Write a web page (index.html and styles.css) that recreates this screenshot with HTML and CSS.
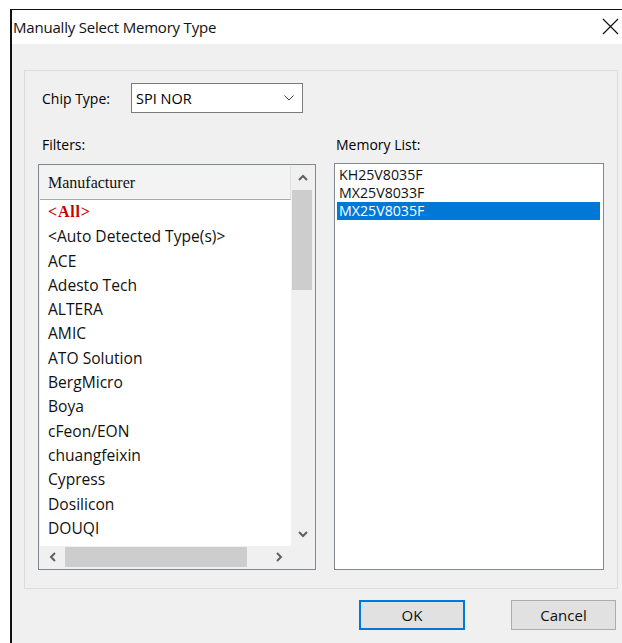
FILE: index.html
```html
<!DOCTYPE html>
<html lang="en">
<head>
<meta charset="utf-8">
<title>Manually Select Memory Type</title>
<link rel="stylesheet" href="styles.css">
</head>
<body>
<div class="window">
  <div class="titlebar">
    <span class="title">Manually Select Memory Type</span>
    <svg class="close" width="17" height="17" viewBox="0 0 17 17">
      <path d="M1 1 L16 16 M16 1 L1 16" stroke="#111" stroke-width="1.2" fill="none"/>
    </svg>
  </div>
  <div class="client">
    <div class="group">
      <div class="chip-row">
        <span class="chip-label">Chip Type:</span>
        <div class="combo">
          <span>SPI NOR</span>
          <svg class="combo-arrow" width="10" height="6" viewBox="0 0 10 6">
            <path d="M0.5 0.5 L5 5 L9.5 0.5" stroke="#444" stroke-width="1" fill="none"/>
          </svg>
        </div>
      </div>
      <div class="columns">
        <div class="col col-filters">
          <div class="caption">Filters:</div>
          <div class="listbox filters">
            <div class="list-main">
              <div class="header">Manufacturer</div>
              <ul class="items">
                <li class="all">&lt;All&gt;</li>
                <li>&lt;Auto Detected Type(s)&gt;</li>
                <li>ACE</li>
                <li>Adesto Tech</li>
                <li>ALTERA</li>
                <li>AMIC</li>
                <li>ATO Solution</li>
                <li>BergMicro</li>
                <li>Boya</li>
                <li>cFeon/EON</li>
                <li>chuangfeixin</li>
                <li>Cypress</li>
                <li>Dosilicon</li>
                <li>DOUQI</li>
              </ul>
            </div>
            <div class="vscroll">
              <div class="sb-btn">
                <svg width="10" height="7" viewBox="0 0 10 7"><path d="M1 6 L5 2 L9 6" stroke="#606060" stroke-width="2" fill="none"/></svg>
              </div>
              <div class="vtrack"><div class="vthumb"></div></div>
              <div class="sb-btn">
                <svg width="10" height="7" viewBox="0 0 10 7"><path d="M1 1 L5 5 L9 1" stroke="#606060" stroke-width="2" fill="none"/></svg>
              </div>
            </div>
            <div class="hscroll">
              <div class="sb-btn h">
                <svg width="7" height="10" viewBox="0 0 7 10"><path d="M6 1 L2 5 L6 9" stroke="#606060" stroke-width="2" fill="none"/></svg>
              </div>
              <div class="htrack"><div class="hthumb"></div></div>
              <div class="sb-btn h">
                <svg width="7" height="10" viewBox="0 0 7 10"><path d="M1 1 L5 5 L1 9" stroke="#606060" stroke-width="2" fill="none"/></svg>
              </div>
            </div>
            <div class="corner"></div>
          </div>
        </div>
        <div class="col col-memory">
          <div class="caption">Memory List:</div>
          <ul class="listbox memory">
            <li>KH25V8035F</li>
            <li>MX25V8033F</li>
            <li class="selected">MX25V8035F</li>
          </ul>
        </div>
      </div>
    </div>
    <div class="buttons">
      <button class="btn default">OK</button>
      <button class="btn">Cancel</button>
    </div>
  </div>
</div>
</body>
</html>
```

FILE: styles.css
```css
* {
  box-sizing: border-box;
}

html, body {
  margin: 0;
  padding: 0;
}

body {
  width: 622px;
  height: 643px;
  overflow: hidden;
  background: #fff;
  font-family: "Open Sans", "Noto Sans", sans-serif;
  color: #000;
}

.window {
  margin: 9px 0 0 10px;
  width: 612px;
  height: 634px;
  border-top: 1px solid #111;
  border-left: 2px solid #111;
  display: flex;
  flex-direction: column;
}

.titlebar {
  height: 34px;
  flex: none;
  background: #fff;
  display: flex;
  align-items: center;
  justify-content: space-between;
  padding: 0 3px 0 1px;
}

.title {
  font-size: 15px;
  letter-spacing: -0.2px;
  color: #111;
}

.close {
  display: block;
  margin-top: -1px;
}

.client {
  flex: 1;
  background: #f0f0f0;
  padding: 26px 0 0 12px;
}

.group {
  width: 594px;
  height: 519px;
  border: 1px solid #dcdcdc;
  padding: 12px 0 0 13px;
}

.chip-row {
  display: flex;
  align-items: center;
  height: 30px;
  padding-left: 4px;
}

.chip-label {
  width: 89px;
  font-size: 14px;
}

.combo {
  width: 172px;
  height: 30px;
  border: 1px solid #7a7a7a;
  background: #fff;
  display: flex;
  align-items: center;
  justify-content: space-between;
  padding: 0 8px 0 4px;
  font-size: 14.5px;
}

.combo-arrow {
  display: block;
}

.columns {
  display: flex;
  gap: 18px;
  margin-top: 20px;
}

.col {
  display: flex;
  flex-direction: column;
}

.col-filters {
  width: 278px;
}

.col-memory {
  width: 270px;
}

.caption {
  height: 30px;
  line-height: 24px;
  font-size: 14px;
  padding-left: 2px;
}

.col-filters .caption {
  padding-left: 4px;
}

.listbox {
  height: 407px;
  border: 1px solid #828790;
  background: #fff;
  margin: 0;
}

/* Manufacturer list: content, vertical bar, horizontal bar, corner */
.filters {
  margin-top: 1px;
  height: 406px;
  padding: 1px;
  background: #f0f0f0;
  display: grid;
  grid-template-columns: 1fr 23px;
  grid-template-rows: 1fr 22px;
}

.list-main {
  background: #fff;
  overflow: hidden;
  min-height: 0;
}

.header {
  height: 34px;
  background: #f3f3f3;
  border-bottom: 1px solid #a8a8a8;
  border-right: 1px solid #e0e0e0;
  font-family: "Liberation Serif", "DejaVu Serif", serif;
  font-size: 16px;
  line-height: 33px;
  padding-left: 8px;
  color: #111;
}

.items {
  list-style: none;
  margin: 0;
  padding: 0;
}

.items li {
  height: 24.3px;
  line-height: 24.3px;
  padding-left: 8px;
  font-size: 15.6px;
  white-space: nowrap;
  color: #111;
}

.items li.all {
  font-family: "Liberation Serif", "DejaVu Serif", serif;
  font-weight: bold;
  font-size: 16px;
  letter-spacing: 0.8px;
  color: #c80000;
}

.vscroll {
  display: flex;
  flex-direction: column;
  background: #f0f0f0;
}

.sb-btn {
  flex: none;
  height: 23px;
  display: flex;
  align-items: center;
  justify-content: center;
}

.sb-btn svg {
  display: block;
}

.vtrack {
  flex: 1;
  padding: 1px 2px 0 1px;
}

.vthumb {
  height: 100px;
  background: #cdcdcd;
}

.hscroll {
  display: flex;
  background: #f0f0f0;
}

.sb-btn.h {
  height: auto;
  width: 24px;
}

.htrack {
  flex: 1;
  padding: 1px 0 1px 1px;
}

.hthumb {
  width: 182px;
  height: 100%;
  background: #cdcdcd;
}

.corner {
  background: #f0f0f0;
}

/* Memory list */
.memory {
  list-style: none;
  padding: 2px 3px 2px 2px;
}

.memory li {
  height: 18px;
  line-height: 18px;
  padding-left: 2px;
  font-size: 14.2px;
  color: #111;
}

.memory li.selected {
  background: #0078d7;
  color: #fff;
}

.buttons {
  display: flex;
  justify-content: flex-end;
  gap: 46px;
  margin-top: 11px;
  padding-right: 6px;
}

.btn {
  height: 30px;
  width: 105px;
  background: #e1e1e1;
  border: 1px solid #adadad;
  font-family: "Open Sans", "Noto Sans", sans-serif;
  font-size: 15px;
  color: #111;
  padding: 0;
  margin: 0;
}

.btn.default {
  width: 106px;
  border: 2px solid #0078d7;
}
```
